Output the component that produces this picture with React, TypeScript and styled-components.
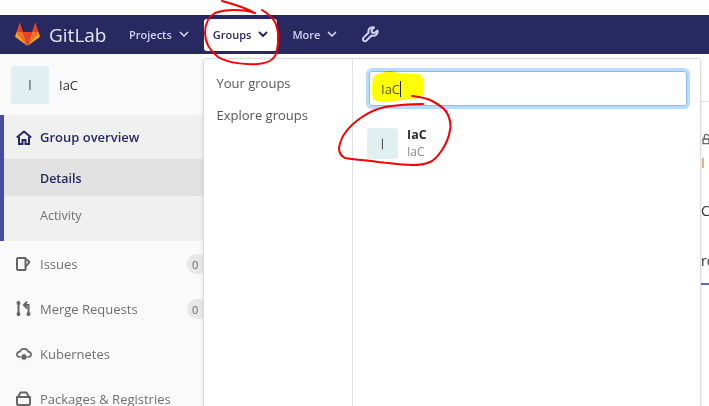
import React from 'react'
import styled, { createGlobalStyle } from 'styled-components'

const GlobalStyle = createGlobalStyle`
  html, body {
    margin: 0;
    padding: 0;
    background: #fff;
    overflow: hidden;
  }
  body {
    font-family: "Open Sans", "Noto Sans", sans-serif;
    font-size: 13px;
  }
`

const Page = styled.div`
  position: relative;
  width: 709px;
  height: 406px;
  overflow: hidden;
  padding-top: 15px;
  box-sizing: border-box;
`

const Navbar = styled.header`
  height: 39px;
  background: #292961;
  display: flex;
  align-items: center;
  padding-left: 15px;
  color: #d1d1f0;
`

const Brand = styled.div`
  display: flex;
  align-items: center;
  gap: 9px;
  width: 105px;
  color: #e6e6f5;
  font-size: 19px;
`

const NavItem = styled.div<{ $active?: boolean }>`
  display: flex;
  align-items: center;
  gap: 7px;
  height: 32px;
  padding: 0 9px;
  margin-right: 6px;
  border-radius: 3px;
  font-size: 11px;
  font-weight: 600;
  background: ${p => (p.$active ? '#fff' : 'transparent')};
  color: ${p => (p.$active ? '#292961' : '#d1d1f0')};
`

const ToolsItem = styled(NavItem)`
  padding-left: 10px;
`

const Body = styled.div`
  display: flex;
  height: 352px;
`

const Sidebar = styled.aside`
  width: 203px;
  flex-shrink: 0;
  background: #fafafa;
  overflow: hidden;
`

const ContextHeader = styled.div`
  height: 61px;
  display: flex;
  align-items: center;
  gap: 10px;
  padding-left: 11px;
  font-size: 13px;
  color: #303030;
`

const Avatar = styled.div<{ $size: number }>`
  width: ${p => p.$size}px;
  height: ${p => p.$size}px;
  flex-shrink: 0;
  border-radius: 3px;
  background: #e0eff0;
  color: #555;
  display: flex;
  align-items: center;
  justify-content: center;
  font-size: 14px;
`

const ActiveGroup = styled.div`
  border-left: 4px solid #4b4ba3;
  background: #f0f0f0;
  height: 126px;
`

const GroupTitle = styled.div`
  height: 44px;
  display: flex;
  align-items: center;
  gap: 8px;
  padding-left: 12px;
  font-size: 13px;
  font-weight: 600;
  color: #292961;
`

const SubItem = styled.div<{ $active?: boolean }>`
  height: 37px;
  display: flex;
  align-items: center;
  padding: 1px 0 0 36px;
  box-sizing: border-box;
  font-size: 12.5px;
  font-weight: ${p => (p.$active ? 600 : 400)};
  color: ${p => (p.$active ? '#292961' : '#707070')};
  background: ${p => (p.$active ? '#e1e1e1' : 'transparent')};
`

const MenuItem = styled.div`
  height: 45px;
  display: flex;
  align-items: center;
  gap: 9px;
  padding-left: 16px;
  font-size: 13px;
  color: #707070;
  position: relative;
`

const IconSlot = styled.span`
  width: 15px;
  height: 16px;
  flex-shrink: 0;
  display: flex;
  align-items: center;
  justify-content: center;
`

const Badge = styled.span`
  position: absolute;
  left: 187px;
  top: 13px;
  width: 22px;
  height: 20px;
  border-radius: 10px;
  background: #e8e8e8;
  color: #666;
  font-size: 11px;
  display: flex;
  align-items: center;
  padding-left: 5px;
  box-sizing: border-box;
`

const Main = styled.main`
  flex: 1;
  position: relative;
  background: #fff;
  overflow: hidden;
`

const Fragments = styled.div`
  margin-left: 498px;
  padding-top: 47px;
  display: flex;
  flex-direction: column;
  color: #303030;
  font-size: 14px;
  line-height: 16px;
`

const Rule = styled.div`
  height: 1px;
  background: #e5e5e5;
`

const Tail = styled.div<{ $h: number; $color?: string }>`
  height: ${p => p.$h}px;
  display: flex;
  align-items: flex-end;
  color: ${p => p.$color ?? '#303030'};
`

const TabLine = styled.div`
  height: 2px;
  margin-top: 14px;
  background: #6666c4;
`

const Dropdown = styled.div`
  position: absolute;
  left: 203px;
  top: 58px;
  width: 498px;
  height: 360px;
  display: flex;
  background: #fff;
  border: 1px solid #dbdbdb;
  border-radius: 3px;
  box-sizing: border-box;
  box-shadow: 0 2px 4px rgba(0, 0, 0, 0.1);
`

const DropdownNav = styled.nav`
  width: 149px;
  flex-shrink: 0;
  border-right: 1px solid #dfdfdf;
  padding: 8px 0 0 12.5px;
  box-sizing: border-box;
  color: #555;
  font-size: 13px;
`

const DropdownLink = styled.div`
  height: 32px;
  display: flex;
  align-items: center;
`

const DropdownPane = styled.div`
  flex: 1;
  padding: 12px 13px 0 16px;
`

const SearchBox = styled.div`
  height: 33px;
  border: 1px solid #80bdff;
  border-radius: 3px;
  box-shadow: 0 0 0 3px rgba(128, 189, 255, 0.55);
  display: flex;
  align-items: center;
  padding-left: 11px;
  font-size: 13px;
  color: #555;
`

const Caret = styled.span`
  width: 1px;
  height: 16px;
  background: #222;
`

const GroupResult = styled.div`
  display: flex;
  align-items: center;
  gap: 9px;
  margin: 21px 0 0 -2px;
`

const ResultText = styled.div`
  display: flex;
  flex-direction: column;
  gap: 2px;
`

const ResultName = styled.div`
  font-size: 12.5px;
  font-weight: 700;
  color: #303030;
  line-height: 16px;
`

const ResultPath = styled.div`
  font-size: 12px;
  color: #8a8a8a;
  line-height: 14px;
`

const Marker = styled.svg`
  position: absolute;
  left: 0;
  top: 0;
  pointer-events: none;
  mix-blend-mode: multiply;
`

const Scribbles = styled.svg`
  position: absolute;
  left: 0;
  top: 0;
  pointer-events: none;
`

const Chevron = ({ color = 'currentColor', weight = 1.7 }: { color?: string; weight?: number }) => (
  <svg width="10" height="7" viewBox="0 0 10 7" fill="none">
    <path d="M1.5 1.5 5 5l3.5-3.5" stroke={color} strokeWidth={weight} strokeLinecap="round" strokeLinejoin="round" />
  </svg>
)

const TanukiLogo = () => (
  <svg width="25" height="23" viewBox="0 0 25 23">
    <path d="M12.5 23 17 9H8z" fill="#e24329" />
    <path d="M12.5 23 8 9H1.5z" fill="#fc6d26" />
    <path d="M1.5 9 .2 13c-.2.5 0 1 .4 1.3L12.5 23z" fill="#fca326" />
    <path d="M1.5 9H8L5.2.6c-.2-.5-.8-.5-1 0z" fill="#e24329" />
    <path d="M12.5 23 17 9h6.5z" fill="#fc6d26" />
    <path d="M23.5 9l1.3 4c.2.5 0 1-.4 1.3L12.5 23z" fill="#fca326" />
    <path d="M23.5 9H17L19.8.6c.2-.5.8-.5 1 0z" fill="#e24329" />
  </svg>
)

const WrenchIcon = () => (
  <svg width="17" height="17" viewBox="0 0 17 17" fill="none" stroke="#d1d1f0" strokeWidth="2" strokeLinejoin="round">
    <path d="M15.5 4.5 12.5 7 10 6.500 9.500 4 12 1.5C9.800.6 7 1.800 6.500 4.200c-.2 1 0 1.800.2 2.300L1.600 11.600c-.9.900-.9 2.200-.1 3s2.200.8 3-.1l5-5c2.700.8 5.300-.4 6-2.800.2-.8.2-1.500 0-2.200z" />
  </svg>
)

const HomeIcon = () => (
  <svg width="16" height="15" viewBox="0 0 16 15" fill="none" stroke="#292961" strokeWidth="2" strokeLinejoin="miter">
    <path d="M.8 7.5 8 1.5l7.2 6" strokeLinejoin="round" />
    <path d="M3 6.500V14h3.500V10h3v4H13V6.500" />
  </svg>
)

const IssuesIcon = () => (
  <svg width="15" height="14" viewBox="0 0 15 14" fill="none" stroke="#666" strokeWidth="2" strokeLinejoin="round">
    <path d="M9.500 1H2a1 1 0 0 0-1 1v10a1 1 0 0 0 1 1h7.500z" />
    <path d="M10 2 13.500 5 10 9.500" />
  </svg>
)

const MergeIcon = () => (
  <svg width="15" height="15" viewBox="0 0 15 15" fill="none" stroke="#666" strokeWidth="2" strokeLinecap="round">
    <path d="M2.500 2v11" />
    <circle cx="2.500" cy="2" r="1" fill="#666" />
    <circle cx="2.500" cy="13" r="1" fill="#666" />
    <path d="M12.500 13V4H9M10.500 1.300 8 4l2.500 2.700" />
    <circle cx="12.500" cy="13" r="1" fill="#666" />
  </svg>
)

const CloudIcon = () => (
  <svg width="16" height="14" viewBox="0 0 16 14" fill="none" stroke="#666" strokeWidth="1.700" strokeLinejoin="round" style={{ flexShrink: 0 }}>
    <path d="M4.500 9.800H3A2.200 2.200 0 0 1 1 7.200 3 3 0 0 1 3.800 4.700 4.500 4.500 0 0 1 12.200 4.700 3 3 0 0 1 15 7.200 2.200 2.200 0 0 1 13 9.800h-1.500" />
    <circle cx="8" cy="10" r="2.500" fill="#666" stroke="none" />
    <path d="M8 6.800v6.400M4.900 10h6.200M5.900 7.900l4.200 4.200M10.100 7.900l-4.200 4.200" strokeWidth="1.100" />
  </svg>
)

const PackageIcon = () => (
  <svg width="15" height="15" viewBox="0 0 15 15" fill="none" stroke="#666" strokeWidth="2" strokeLinejoin="round">
    <path d="M1 6h13v7a1 1 0 0 1-1 1H2a1 1 0 0 1-1-1z" />
    <path d="M2 6 4.500 1.500h6L13 6" />
  </svg>
)

const LockIcon = () => (
  <svg width="12" height="16" viewBox="0 0 12 16" fill="none" stroke="#666" strokeWidth="2">
    <path d="M3 8h9v7H3zM5 8V4a3 3 0 0 1 6 0" />
  </svg>
)

const menu = [
  { label: 'Issues', icon: <IssuesIcon />, count: 0 },
  { label: 'Merge Requests', icon: <MergeIcon />, count: 0 },
  { label: 'Kubernetes', icon: <CloudIcon /> },
  { label: 'Packages & Registries', icon: <PackageIcon /> },
]

export default function App() {
  return (
    <Page>
      <GlobalStyle />
      <Navbar>
        <Brand>
          <TanukiLogo />
          GitLab
        </Brand>
        <NavItem>Projects <Chevron /></NavItem>
        <NavItem $active>Groups <Chevron color="#292961" weight={2} /></NavItem>
        <NavItem>More <Chevron /></NavItem>
        <ToolsItem><WrenchIcon /></ToolsItem>
      </Navbar>
      <Body>
        <Sidebar>
          <ContextHeader>
            <Avatar $size={38}>I</Avatar>
            IaC
          </ContextHeader>
          <ActiveGroup>
            <GroupTitle><HomeIcon /> Group overview</GroupTitle>
            <SubItem $active>Details</SubItem>
            <SubItem>Activity</SubItem>
          </ActiveGroup>
          {menu.map(m => (
            <MenuItem key={m.label}>
              <IconSlot>{m.icon}</IconSlot>
              {m.label}
              {m.count !== undefined && <Badge>{m.count}</Badge>}
            </MenuItem>
          ))}
        </Sidebar>
        <Main>
          <Fragments>
            <Rule />
            <Tail $h={45}><LockIcon /></Tail>
            <Tail $h={24} $color="#d9822b">I</Tail>
            <Tail $h={48}>C</Tail>
            <Tail $h={50}>ro</Tail>
            <TabLine />
          </Fragments>
        </Main>
      </Body>
      <Dropdown>
        <DropdownNav>
          <DropdownLink>Your groups</DropdownLink>
          <DropdownLink>Explore groups</DropdownLink>
        </DropdownNav>
        <DropdownPane>
          <SearchBox>
            IaC<Caret />
          </SearchBox>
          <GroupResult>
            <Avatar $size={31}>I</Avatar>
            <ResultText>
              <ResultName>IaC</ResultName>
              <ResultPath>IaC</ResultPath>
            </ResultText>
          </GroupResult>
        </DropdownPane>
      </Dropdown>
      <Marker width="709" height="406" viewBox="0 0 709 406">
        <path
          fill="#ffff00"
          d="M373 78C375 74 380 73 383 72.500C386 70.500 394 70.500 397 73C405 74 414 73.500 419 74C424 76 425 88 423 95C418 100 405 99 395 101C385 103 376 102 373 99C371 92 372 84 373 78Z"
        />
      </Marker>
      <Scribbles width="709" height="406" viewBox="0 0 709 406" fill="none" stroke="#f40000" strokeWidth="2" strokeLinecap="round" strokeLinejoin="round">
        <path d="M222 1C233 4 246 8 255 13C244 9 225 9 215 13C208 17 205 25 205 33C205 41 209 50 218 57C228 63 246 65 258 64C270 63 276 58 277 50C279 40 279 31 275 22C272 17 267 13 262 10" />
        <path d="M412 96C420 97 427 98 432 101C440 105 446 110 448 115C451 122 451 126 450 130C449 137 446 144 442 150C438 156 435 160 430 162C424 165 418 165 412 165C400 165 390 163 378 162C366 160 354 160 345 158C341 156 339 152 339 148C340 142 342 137 345 133C350 126 356 121 362 117C368 113 376 109 385 107C397 105 410 104 423 104" />
      </Scribbles>
    </Page>
  )
}
